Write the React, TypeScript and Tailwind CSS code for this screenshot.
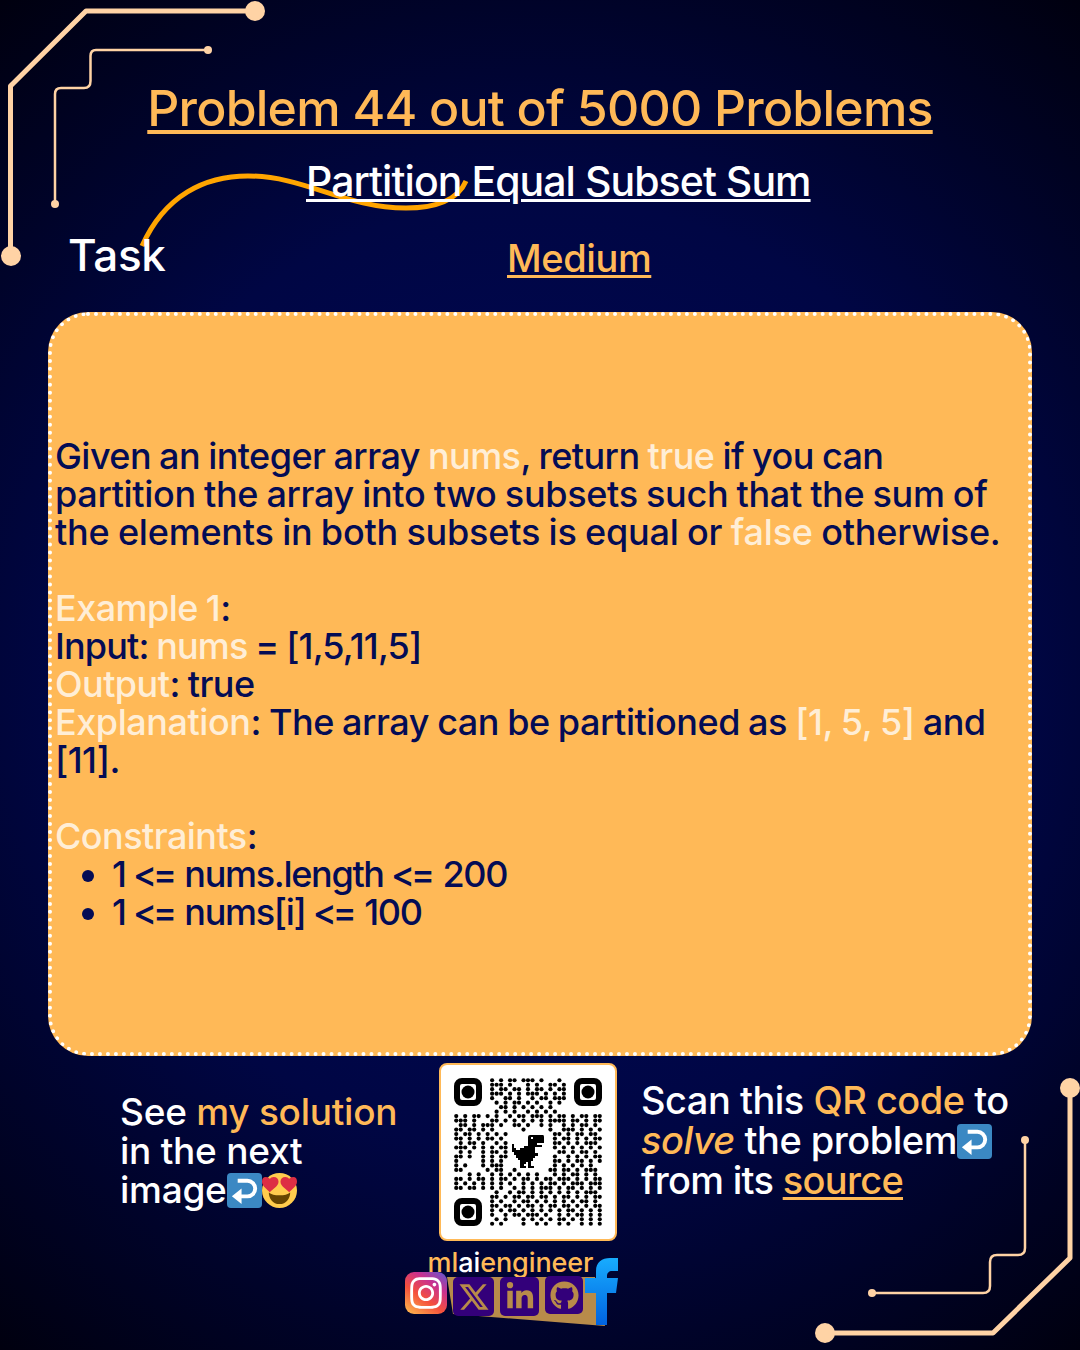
import React from 'react';
import { FaGithub, FaInstagram, FaLinkedinIn } from 'react-icons/fa';
import { RiTwitterXLine } from 'react-icons/ri';

const font = "font-['Inter',sans-serif]";

function ReturnEmoji({ className }: { className?: string }) {
  return (
    <svg viewBox="0 0 36 36" className={className}>
      <rect x="0" y="0" width="36" height="36" rx="4" fill="#3b88c3" />
      <path d="M11 8h10a8 8 0 0 1 0 16H12" fill="none" stroke="#fff" strokeWidth="4" />
      <path d="M15 16v16L5 24z" fill="#fff" />
    </svg>
  );
}

function HeartEyes({ className }: { className?: string }) {
  return (
    <svg viewBox="0 0 36 36" className={className}>
      <circle cx="18" cy="18" r="18" fill="#ffcc4d" />
      <path d="M7 20c2.500 2 6 3 11 3s8.500-1 11-3c0 6-4 12-11 12S7 26 7 20z" fill="#664500" />
      <path d="M17 9c0-3-2-5-5-5-2 0-3 1-4 2-1-1-2-2-4-2-3 0-4 2-4 5 0 5 6 8 8 11 2-3 9-6 9-11z" fill="#dd2e44" />
      <path d="M36 9c0-3-1-5-4-5-2 0-3 1-4 2-1-1-2-2-4-2-3 0-5 2-5 5 0 5 7 8 9 11 2-3 8-6 8-11z" fill="#dd2e44" />
    </svg>
  );
}

// modules read off the picture, 33x33 grid
const qrRows = [
  '........#.#.##.###.#...#.........',
  '........###.#...#.#..##.#........',
  '........#.##.##.#.##.#.##........',
  '........###.#.#.###.#.#.#........',
  '........#..##.#..#.##.###........',
  '.........#.#.##.#.#..#.#.........',
  '..........##.#.#.#.#.#...........',
  '.........#.#.#..#.#.#.#..........',
  '#.#.##.#.#..#.##.###.#.##.#.##.##',
  '###.#...##.#.#.#.#.#.####.##.#.##',
  '.##.#.###.#..##.#..#.#..#.#.##.#.',
  '##.##.#.#......#.....#..###.#.#.#',
  '#.##.#.#.#.#..........##.#.##.##.',
  '##.#.#.##.#...........#.##.#.#.##',
  '.#.##.#..#.#..........##.#.#.###.',
  '###.#.#.#.##..........#.#.#.#.#.#',
  '.#.#..#.##.#...........##.#.##.#.',
  '##.#..#.#.##..........#..#.#.#.##',
  '#.....#.#.#...........##.#.##.#.#',
  '#.#...#.###...........#.#.#.#.#..',
  '##.....#.##..#.......##.##.#.###.',
  '...#.#..#.#.#.#.#.#...#.#.##.#.#.',
  '##.#.##.#.##.#.##.#.##.###.#.#.##',
  '#.#.#.#.#.#.#..#.#.#.##.#.###.###',
  '##.##.#.#.#..#.#.#.###.#.##.#.#.#',
  '.........#..#.##.#.#.#.#.#.#.###.',
  '........##.#.##.##.##.#.##.#.#.##',
  '........#.#..#.##.#.#.#.#.#.##.#.',
  '........##.##.#.##.#.##.##.#.#.##',
  '........#.#.##.#.#.#.#.#.##.#.#.#',
  '........#..#.##.###.#..#.#.##.#.#',
  '.........#.#...#.#.#.#.##.#.#.#.#',
  '........#.#....#..#.#..#.#..#.#.#',
];

const PITCH = 148 / 33;

function Finder({ x, y }: { x: number; y: number }) {
  return (
    <g>
      <rect x={x + 3} y={y + 3} width="22" height="22" rx="5" fill="none" stroke="#000" strokeWidth="6" />
      <circle cx={x + 14} cy={y + 14} r="6.500" fill="#000" />
    </g>
  );
}

function QrCode() {
  return (
    <svg viewBox="0 0 148 148" className="w-[148px] h-[148px]">
      {qrRows.map((row, y) =>
        row.split('').map((c, x) =>
          c === '#' ? (
            <circle key={`${x}-${y}`} cx={x * PITCH + PITCH / 2} cy={y * PITCH + PITCH / 2} r="2.100" fill="#000" />
          ) : null
        )
      )}
      <Finder x={0} y={0} />
      <Finder x={120} y={0} />
      <Finder x={0} y={120} />
      {/* dino */}
      <path
        d="M76 57H89Q90 57 90 59V65H83V67H88V69H81V75H84V78H81V80H79V83H77V88H80V90H74V84H72V86H70V88H72V90H66V82H64V80H62V77H60V74H58V66H60V70H62V72H66V70H70V68H74V59Q74 57 76 57Z"
        fill="#000"
      />
      <rect x="77" y="59" width="2" height="2" fill="#fff" />
    </svg>
  );
}

function SocialRow() {
  return (
    <div className="relative h-[68px] w-[214px]">
      {/* tan backdrop behind the icons */}
      <svg viewBox="0 0 214 68" className="absolute left-0 top-0 w-[214px] h-[68px]">
        <defs>
          <linearGradient id="fb" x1="0" y1="0" x2="0" y2="1">
            <stop offset="0" stopColor="#18acfe" />
            <stop offset="1" stopColor="#0163e0" />
          </linearGradient>
        </defs>
        <path d="M42 19H190L200 68L48 56z" fill="#b88b4a" />
        <path
          d="M191 67V35h-11V20h11v-7c0-9 6-13 14-13h8v13h-6c-3 0-5 2-5 5v2h11l-2 15h-9v32z"
          fill="url(#fb)"
        />
      </svg>
      <div className="absolute left-0 top-[14px] w-[42px] h-[42px] rounded-[9px] bg-[linear-gradient(35deg,#fdc04e_0%,#f5503c_40%,#c9318f_70%,#5b5bd6_100%)] flex items-center justify-center">
        <FaInstagram className="w-[36px] h-[36px] text-white" />
      </div>
      <div className="absolute left-[48px] top-[19px] w-[41px] h-[39px] rounded-[5px] bg-[#33007a] flex items-center justify-center">
        <RiTwitterXLine className="w-[34px] h-[34px] text-[#b88b4a]" />
      </div>
      <div className="absolute left-[95px] top-[19px] w-[39px] h-[39px] rounded-[5px] bg-[#33007a] flex items-center justify-center">
        <FaLinkedinIn className="w-[30px] h-[30px] text-[#b88b4a]" />
      </div>
      <div className="absolute left-[140px] top-[18px] w-[38px] h-[38px] rounded-[5px] bg-[#33007a] flex items-center justify-center">
        <FaGithub className="w-[29px] h-[29px] text-[#b88b4a]" />
      </div>
    </div>
  );
}

export default function App() {
  const light = 'text-[#ffeed6]';
  const gold = 'text-[#ffb957]';
  const cmp = 'tracking-[-4px] mr-[4px]';

  return (
    <div className={`${font} font-medium relative w-[1080px] h-[1350px] overflow-hidden bg-[radial-gradient(circle_at_center,#00085a_0%,#000644_55%,#00000f_100%)]`}>
      {/* circuit traces and the swoosh */}
      <svg viewBox="0 0 1080 1350" className="absolute left-0 top-0 w-[1080px] h-[1350px]" fill="none">
        <g stroke="#ffd3a5" strokeLinejoin="round">
          <path d="M255 11H86L10.500 86V256" strokeWidth="5" />
          <path d="M208 50H96Q90.500 50 90.500 56V81Q90.500 88 84 88H61Q55 88 55 94V204" strokeWidth="2.500" />
          <path d="M1070 1088V1258L993 1333H825" strokeWidth="5" />
          <path d="M1025 1140V1248Q1025 1255 1018 1255H997Q990 1255 990 1262V1286Q990 1293 983 1293H872" strokeWidth="2.500" />
        </g>
        <g fill="#ffd3a5">
          <circle cx="255" cy="11" r="10" />
          <circle cx="208" cy="50" r="4" />
          <circle cx="55" cy="204" r="4" />
          <circle cx="11" cy="256" r="10" />
          <circle cx="1070" cy="1088" r="10" />
          <circle cx="1025" cy="1140" r="4" />
          <circle cx="872" cy="1293" r="4" />
          <circle cx="825" cy="1333" r="10" />
        </g>
        <path d="M142 246C165 195 205 176 248 176C305 176 345 208 406 208C435 208 458 200 466 181" stroke="#ffa500" strokeWidth="5" />
      </svg>

      <div className="relative flex flex-col h-full">
        <h1 className={`pt-[77px] text-center text-[50px] leading-[62px] tracking-[-0.77px] underline underline-offset-[4px] decoration-[4px] ${gold}`}>
          Problem 44 out of 5000 Problems
        </h1>

        <h2 className="mt-[18px] pl-[306px] text-[41px] leading-[48px] tracking-[-0.95px] text-white underline underline-offset-[3px] decoration-[3px]">
          Partition Equal Subset Sum
        </h2>

        <div className="mt-[25px] flex items-start">
          <div className="pl-[68px] w-[507px] text-[44px] leading-[50px] tracking-[-0.3px] text-white">Task</div>
          <div className={`mt-[5px] text-[38px] leading-[46px] tracking-[-0.4px] underline underline-offset-[3px] decoration-[3px] ${gold}`}>Medium</div>
        </div>

        <div className="absolute left-[48px] top-[312px] w-[984px] h-[744px] rounded-[40px] border-[4px] border-dotted border-white bg-[#ffb957] flex items-center pl-[3px] pb-[1px] text-[36px] leading-[38px] tracking-[-0.55px] [word-spacing:-1px] text-[#040c55]">
          <div>
            <p>
              Given an integer array <span className={light}>nums</span>, return <span className={light}>true</span> if you can
              <br />
              <span className="tracking-[-0.32px]">partition the array into two subsets such that the sum of</span>
              <br />
              <span className="tracking-[-0.2px]">
                the elements in both subsets is equal or <span className={light}>false</span> otherwise.
              </span>
            </p>
            <p className="mt-[38px]">
              <span className={light}>Example 1</span>:
              <br />
              <span className="tracking-[-0.85px]">
                Input: <span className={light}>nums</span> = [1,5,11,5]
              </span>
              <br />
              <span className={light}>Output</span>: true
              <br />
              <span className="tracking-[-0.45px]">
                <span className={light}>Explanation</span>: The array can be partitioned as <span className={light}>[1, 5, 5]</span> and
              </span>
              <br />
              [11].
            </p>
            <p className="mt-[38px]">
              <span className={light}>Constraints</span>:
            </p>
            <ul className="list-disc pl-[57px] tracking-[-1.3px]">
              <li>1 <span className={cmp}>&lt;=</span> nums.length <span className={cmp}>&lt;=</span> 200</li>
              <li>1 <span className={cmp}>&lt;=</span> nums[i] <span className={cmp}>&lt;=</span> 100</li>
            </ul>
          </div>
        </div>

        <div className="absolute left-0 top-[1063px] w-full flex items-start">
          <div className="ml-[120px] mt-[29px] w-[319px] text-[37px] leading-[39px] tracking-[-0.25px] text-white">
            See <span className={gold}>my solution</span>
            <br />
            in the next
            <br />
            image
            <ReturnEmoji className="inline-block w-[35px] h-[35px] align-[-5px]" />
            <HeartEyes className="inline-block w-[35px] h-[35px] align-[-5px]" />
          </div>

          <div className="w-[178px] flex flex-col items-center">
            <div className="w-[178px] h-[178px] rounded-[8px] border-2 border-[#ffb957] bg-white flex items-center justify-center">
              <QrCode />
            </div>
            <div className="ml-[-35px] mt-[5px] text-[27px] leading-[34px] tracking-[-0.1px] whitespace-nowrap text-[#ffb957]">
              ml<span className="text-white">ai</span>engineer
            </div>
            <div className="ml-[-32px] mt-[-22px]">
              <SocialRow />
            </div>
          </div>

          <div className="ml-[24px] mt-[17px] text-[38px] leading-[40px] tracking-[-0.5px] text-white whitespace-nowrap">
            Scan this <span className={gold}>QR code</span> to
            <br />
            <span className={`italic ${gold}`}>solve</span> the problem
            <ReturnEmoji className="inline-block w-[35px] h-[35px] align-[-5px]" />
            <br />
            <span className="tracking-[-0.7px]">
              from its <span className={`underline underline-offset-[3px] decoration-[3px] ${gold}`}>source</span>
            </span>
          </div>
        </div>
      </div>
    </div>
  );
}
